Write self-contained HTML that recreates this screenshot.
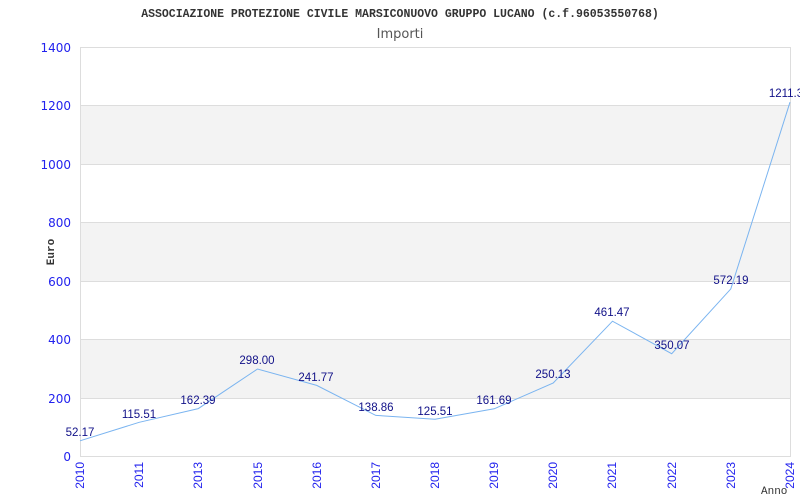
<!DOCTYPE html>
<html><head><meta charset="utf-8"><style>body{margin:0;background:#fff}svg{display:block}</style></head><body>
<svg width="800" height="500" xmlns="http://www.w3.org/2000/svg">
<rect width="800" height="500" fill="#fff"/>
<text x="400" y="17" text-anchor="middle" font-family="Liberation Mono, monospace" font-size="11.5" font-weight="bold" fill="#333">ASSOCIAZIONE PROTEZIONE CIVILE MARSICONUOVO GRUPPO LUCANO (c.f.96053550768)</text>
<text x="400" y="38" text-anchor="middle" font-family="DejaVu Sans, sans-serif" font-size="13" fill="#555">Importi</text>
<g fill="#f3f3f3"><rect x="80" y="105" width="710" height="59"/><rect x="80" y="222" width="710" height="59"/><rect x="80" y="339" width="710" height="59"/></g>
<g stroke="#ddd" stroke-width="1"><line x1="80" y1="47.5" x2="790" y2="47.5"/><line x1="80" y1="105.5" x2="790" y2="105.5"/><line x1="80" y1="164.5" x2="790" y2="164.5"/><line x1="80" y1="222.5" x2="790" y2="222.5"/><line x1="80" y1="281.5" x2="790" y2="281.5"/><line x1="80" y1="339.5" x2="790" y2="339.5"/><line x1="80" y1="398.5" x2="790" y2="398.5"/><line x1="80" y1="456.5" x2="790" y2="456.5"/><line x1="80.5" y1="47" x2="80.5" y2="457"/><line x1="790.5" y1="47" x2="790.5" y2="457"/></g>
<g font-family="DejaVu Sans, sans-serif" font-size="12" fill="#2222ee" text-anchor="end">
<text x="71" y="52">1400</text><text x="71" y="110">1200</text><text x="71" y="169">1000</text><text x="71" y="227">800</text><text x="71" y="286">600</text><text x="71" y="344">400</text><text x="71" y="403">200</text><text x="71" y="461">0</text></g>
<text transform="translate(54,252) rotate(-90)" text-anchor="middle" font-family="Liberation Mono, monospace" font-size="11" font-weight="bold" fill="#333">Euro</text>
<g font-family="Liberation Sans, sans-serif" font-size="12" fill="#2222ee" text-anchor="end">
<text transform="translate(84,462) rotate(-90)">2010</text>
<text transform="translate(143,462) rotate(-90)">2011</text>
<text transform="translate(202,462) rotate(-90)">2013</text>
<text transform="translate(262,462) rotate(-90)">2015</text>
<text transform="translate(321,462) rotate(-90)">2016</text>
<text transform="translate(380,462) rotate(-90)">2017</text>
<text transform="translate(439,462) rotate(-90)">2018</text>
<text transform="translate(498,462) rotate(-90)">2019</text>
<text transform="translate(557,462) rotate(-90)">2020</text>
<text transform="translate(616,462) rotate(-90)">2021</text>
<text transform="translate(676,462) rotate(-90)">2022</text>
<text transform="translate(735,462) rotate(-90)">2023</text>
<text transform="translate(794,462) rotate(-90)">2024</text></g>
<text x="761" y="494" font-family="Liberation Mono, monospace" font-size="11" fill="#333">Anno</text>
<polyline fill="none" stroke="#7ab4f0" stroke-width="1" points="80,440.8 139.2,422.3 198.3,408.6 257.5,369 316.7,385.4 375.8,415.4 435,419.3 494.2,408.8 553.3,382.9 612.5,321.2 671.7,353.7 730.8,288.9 790,102.2"/>
<g font-family="Liberation Sans, sans-serif" font-size="11.5" fill="#111188" text-anchor="middle">
<text x="80" y="436">52.17</text><text x="139" y="418">115.51</text><text x="198" y="404">162.39</text><text x="257" y="364">298.00</text><text x="316" y="381">241.77</text><text x="376" y="411">138.86</text><text x="435" y="415">125.51</text><text x="494" y="404">161.69</text><text x="553" y="378">250.13</text><text x="612" y="316">461.47</text><text x="672" y="349">350.07</text><text x="731" y="284">572.19</text><text x="786" y="97">1211.3</text></g>
</svg>
</body></html>
